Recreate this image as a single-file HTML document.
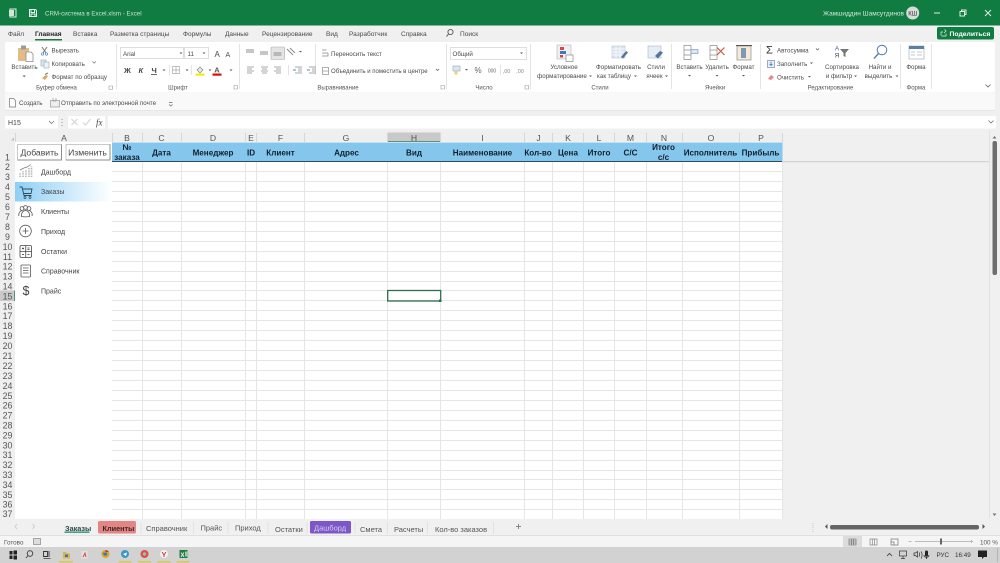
<!DOCTYPE html>
<html lang="ru"><head><meta charset="utf-8"><title>CRM-система в Excel.xlsm - Excel</title>
<style>
html,body{margin:0;padding:0;background:#f0f0f0;overflow:hidden;width:1000px;height:563px}
svg{display:block;font-family:"Liberation Sans",Arial,sans-serif;filter:blur(.3px)}
.r{font-size:6.2px;fill:#4a4a4a}
.t{font-size:6.55px;fill:#4a4a4a}
.h{font-size:8.1px;font-weight:bold;fill:#10202e;text-anchor:middle}
.c{font-size:8.6px;fill:#555;text-anchor:middle}
.n{font-size:8.8px;fill:#555;text-anchor:middle}
.m{font-size:7px;fill:#444}
.s{font-size:7.5px;fill:#555}
.g{font-size:6px;fill:#555;text-anchor:middle}
.a{text-anchor:middle}
</style></head><body>
<svg width="1000" height="563" viewBox="0 0 1000 563" xmlns="http://www.w3.org/2000/svg">
<rect width="1000" height="563" fill="#f0f0f0"/>
<!-- title bar -->
<rect width="1000" height="25.5" fill="#107c41"/>
<rect x="10" y="9" width="6" height="8" fill="none" stroke="#e4f0ea" stroke-width="1"/><rect x="9" y="10" width="5" height="6" fill="#cfe5d9"/>
<path d="M29.5 9.5h6l1 1v6h-7zM31 9.5v3h3.5v-3M31 16.5v-2.5h4v2.5" fill="none" stroke="#eaf4ee" stroke-width="1"/>
<text x="45" y="15.5" style="font-size:6.2px;fill:#c9e2d5">CRM-система в Excel.xlsm  -  Excel</text>
<text x="823" y="15.5" style="font-size:6.5px;fill:#d6eadf">Жамшиддин Шамсутдинов</text>
<circle cx="912.7" cy="13" r="6.5" fill="#d8dcd9"/><text x="912.7" y="15.3" class="a" style="font-size:6px;fill:#333">КШ</text>
<path d="M934 13h6" stroke="#dcebe3"/><path d="M960 11.5h4.5v4.5h-4.5zM961.5 11.5v-1.5h4.500v4.500h-1.500" fill="none" stroke="#dcebe3"/><path d="M985 10l6 6M991 10l-6 6" stroke="#dcebe3"/>
<!-- tabs -->
<rect y="25.500" width="1000" height="17" fill="#f0f0f0"/>
<g class="t">
<text x="8" y="36">Файл</text><text x="35" y="36" style="font-weight:bold;fill:#222">Главная</text><text x="73" y="36">Вставка</text><text x="110" y="36">Разметка страницы</text><text x="183" y="36">Формулы</text><text x="225" y="36">Данные</text><text x="262" y="36">Рецензирование</text><text x="326" y="36">Вид</text><text x="349" y="36">Разработчик</text><text x="401" y="36">Справка</text><text x="460" y="36">Поиск</text>
</g>
<rect x="35" y="39" width="27" height="1.500" fill="#217346"/>
<circle cx="450.500" cy="32" r="2.600" fill="none" stroke="#555" stroke-width=".9"/><path d="M448.500 34l-2 2.500" stroke="#555"/>
<rect x="937" y="27" width="57" height="12.500" rx="2" fill="#107c41"/>
<path d="M941 35.500v-3.500h2M941.500 36h4.500v-2.500M944 33l2-2-1.500-1.500" fill="none" stroke="#e8f3ed" stroke-width=".7"/>
<text x="949.500" y="36" style="font-size:6.800px;font-weight:bold;fill:#fff">Поделиться</text>
<!-- ribbon -->
<rect x="5" y="42" width="990" height="50.500" rx="2" fill="#fff"/>
<rect x="5" y="93" width="990" height="17.500" rx="2" fill="#f9f9f9"/>
<rect x="5" y="110" width="990" height="1" fill="#e6e6e6"/>
<path d="M116.500 44v45M239.500 44v45M315.500 44v31M446.500 44v45M530.500 44v45M671.500 44v45M760.500 44v45M900.500 44v45M931.500 44v45" stroke="#e4e4e4"/>
<g class="g">
<text x="56.500" y="89.500">Буфер обмена</text><text x="178" y="89.500">Шрифт</text><text x="338" y="89.500">Выравнивание</text><text x="484" y="89.500">Число</text><text x="600" y="89.500">Стили</text><text x="715" y="89.500">Ячейки</text><text x="830.500" y="89.500">Редактирование</text><text x="916" y="89.500">Форма</text>
</g>
<path d="M109 86h3.500v3.500h-3.500zM234 85.500h3.500v3.500h-3.500zM441 85.500h3.500v3.500h-3.500zM525 85.500h3.500v3.500h-3.500z" fill="none" stroke="#999" stroke-width=".6"/>
<!-- clipboard -->
<rect x="18" y="48" width="11" height="13" fill="#e2bc84"/><rect x="21" y="45.500" width="5" height="4" fill="#9b9b9b"/><path d="M26 52h5l2 2v7.500h-7z" fill="#fff" stroke="#8a8a8a" stroke-width=".8"/>
<text x="24.500" y="69" class="r a">Вставить</text><path d="M22.500 75.500l1.700 1.700 1.700-1.700" fill="#666"/>
<path d="M42 47l4 6M47 47l-4 6" stroke="#777"/><circle cx="42.500" cy="54" r="1.200" fill="none" stroke="#5585c0" stroke-width=".7"/><circle cx="46.500" cy="54" r="1.200" fill="none" stroke="#5585c0" stroke-width=".7"/>
<text x="51.500" y="52.500" class="r">Вырезать</text>
<rect x="41" y="60" width="5" height="6" fill="#dbe7f2" stroke="#93a8bd" stroke-width=".6"/><rect x="44" y="62" width="5" height="6" fill="#eef3f8" stroke="#93a8bd" stroke-width=".6"/>
<text x="51.500" y="66" class="r">Копировать</text><path d="M92.500 61.500l1.700 1.700 1.700-1.700" fill="none" stroke="#666" stroke-width=".6"/>
<path d="M42 78l4-3 2 1-3 4z" fill="#d9a860"/><path d="M45 74.500l3-1.500" stroke="#777"/>
<text x="51.500" y="79" class="r">Формат по образцу</text>
<!-- font -->
<rect x="120.500" y="47.500" width="63" height="11" fill="#fff" stroke="#dedede"/><rect x="184.500" y="47.500" width="24" height="11" fill="#fff" stroke="#dedede"/>
<text x="123" y="56" class="r">Arial</text><text x="187.500" y="56" class="r">11</text>
<path d="M179.500 52.500l1.500 1.500 1.500-1.500M202.500 52.500l1.500 1.500 1.500-1.500" fill="#555"/>
<text x="214.500" y="57" class="r" style="font-size:8px">A</text><text x="225.500" y="57" class="r" style="font-size:7px">A</text>
<g style="font-size:7.500px;font-weight:bold;fill:#444"><text x="124" y="73">Ж</text><text x="138.500" y="73" style="font-style:italic">К</text><text x="151.500" y="73">Ч</text></g>
<rect x="151" y="74" width="6" height=".8" fill="#444"/><path d="M162.500 69.500l1.500 1.500 1.500-1.500M185.500 69.500l1.500 1.500 1.500-1.500M208.500 69.500l1.500 1.500 1.500-1.500M229.500 69.500l1.500 1.500 1.500-1.500" fill="#555"/>
<path d="M172.500 66.500h7v7h-7zM176 66.500v7M172.500 70h7" fill="none" stroke="#aaa" stroke-width=".7"/>
<path d="M169.500 65v10M191.500 65v10" stroke="#e4e4e4"/>
<path d="M197 70l3-3 3 3-3 3z" fill="#e8e8e8" stroke="#777" stroke-width=".6"/><rect x="195.500" y="73.500" width="9" height="2.200" fill="#f5f000"/>
<text x="217" y="72.500" class="a" style="font-size:7.500px;fill:#555;font-weight:bold">A</text><rect x="212.500" y="73.500" width="9" height="2.200" fill="#d01010"/>
<!-- alignment -->
<rect x="271" y="47" width="13.500" height="12.500" rx="1" fill="#e4e4e4" stroke="#aaa" stroke-width=".6"/>
<path d="M246 50h8M246 52h8M260 52h8M260 54h8M273.500 53h8M273.500 55h8" stroke="#8d8d8d"/>
<path d="M247 67h7M247 69h5M247 71h7M247 73h5M261 67h7M262 69h5M261 71h7M262 73h5M274 67h7M276 69h5M274 71h7M276 73h5" stroke="#8d8d8d" stroke-width=".8"/>
<path d="M288.500 65v10" stroke="#e4e4e4"/>
<path d="M287 49l6 6M290 48l5 5" stroke="#8a8a8a"/>
<path d="M299 51l1.500 1.500 1.500-1.500" fill="#555"/>
<path d="M295 67h7M295 73h7M298 69h4M298 71h4M309 67h7M309 73h7M312 69h4M312 71h4" stroke="#8d8d8d" stroke-width=".8"/>
<path d="M293 70h3M307 70h3" stroke="#4a8fc0"/>
<path d="M322 50h4.500M322 53h6M322 56h4.500M328 53v3h-2" fill="none" stroke="#888" stroke-width=".8"/>
<text x="331" y="56" class="r">Переносить текст</text>
<path d="M322.500 67.500h6v7h-6zM322.500 71h6" fill="none" stroke="#999" stroke-width=".8"/>
<text x="331" y="73" class="r" style="font-size:6.050px">Объединить и поместить в центре</text>
<path d="M436 69l1.500 1.500 1.500-1.500" fill="none" stroke="#555" stroke-width=".7"/>
<!-- number -->
<rect x="450.500" y="47.500" width="76" height="12" fill="#fff" stroke="#dedede"/><text x="452.500" y="56" class="r">Общий</text><path d="M520 52.500l1.500 1.500 1.500-1.500" fill="#555"/>
<rect x="453" y="66" width="7" height="5" fill="#dbe7f2" stroke="#8fa5ba" stroke-width=".6"/><circle cx="456" cy="73" r="1.700" fill="#edd27e"/><path d="M465 69l1.500 1.500 1.500-1.500" fill="#555"/>
<text x="478" y="73" class="a" style="font-size:8px;fill:#666">%</text><text x="492" y="72.500" class="a" style="font-size:5px;fill:#666">000</text>
<path d="M500.500 65v10" stroke="#e4e4e4"/><text x="506.500" y="73" class="a" style="font-size:5.500px;fill:#888">,00</text><text x="520" y="73" class="a" style="font-size:5.500px;fill:#888">,00</text>
<!-- styles -->
<rect x="557" y="45" width="14" height="14" fill="#eef0f3" stroke="#b6b6b6" stroke-width=".6"/><rect x="560" y="47" width="4" height="3" fill="#d04a4a"/><rect x="560" y="51" width="6" height="3" fill="#3f79b8"/><rect x="560" y="55" width="3" height="2.500" fill="#d04a4a"/><rect x="566" y="55" width="7" height="6.500" fill="#fff" stroke="#777" stroke-width=".6"/>
<text x="564" y="69" class="r a">Условное</text><text x="562" y="78" class="r a">форматирование</text><path d="M589 75.500l1.500 1.500 1.500-1.500" fill="#555"/>
<rect x="612" y="46" width="13" height="12" fill="#d9e3ef" stroke="#b8c3d0" stroke-width=".6"/><path d="M612 49h13M612 52h13M612 55h13M616 46v12M620 46v12" stroke="#fff" stroke-width=".7"/><path d="M621 57l5-6 2 1.500-5 6z" fill="#55749a"/>
<text x="618.500" y="69" class="r a">Форматировать</text><text x="614" y="78" class="r a">как таблицу</text><path d="M634 75.500l1.500 1.500 1.500-1.500" fill="#555"/>
<rect x="648" y="46" width="13" height="12" fill="#e7edf4" stroke="#aab8c8" stroke-width=".6"/><path d="M655 56l5-5 3 1.500-5 6z" fill="#55749a"/>
<text x="656" y="69" class="r a">Стили</text><text x="654.500" y="78" class="r a">ячеек</text><path d="M665 75.500l1.500 1.500 1.500-1.500" fill="#555"/>
<!-- cells -->
<path d="M684 45.500h7v14h-7zM684 50h7M684 55h7" fill="none" stroke="#8d8d8d" stroke-width=".7"/><rect x="691" y="49.500" width="7" height="4" fill="#dbe7f2" stroke="#6d90b5" stroke-width=".6"/>
<text x="689.500" y="69" class="r a">Вставить</text><path d="M688 75l1.500 1.500 1.500-1.500" fill="#555"/>
<path d="M710 45.500h7v14h-7zM710 50h7M710 55h7" fill="none" stroke="#8d8d8d" stroke-width=".7"/><path d="M717 47.500l7.500 7.500M724.500 47.500l-7.500 7.500" stroke="#d9533f" stroke-width="1.200"/>
<text x="717" y="69" class="r a">Удалить</text><path d="M715.500 75l1.500 1.500 1.500-1.500" fill="#555"/>
<rect x="737" y="46" width="14" height="14" fill="#f7e9d8" stroke="#8d8d8d" stroke-width=".7"/><rect x="741" y="48" width="5" height="10" fill="#7f98b6"/><path d="M736 45.500h16" stroke="#555"/>
<text x="743.500" y="69" class="r a">Формат</text><path d="M742 75l1.500 1.500 1.500-1.500" fill="#555"/>
<!-- editing -->
<text x="766" y="53.500" style="font-size:11px;fill:#333">Σ</text><text x="777" y="52.500" class="r">Автосумма</text><path d="M816 48.500l1.500 1.500 1.500-1.500" fill="none" stroke="#555" stroke-width=".7"/>
<rect x="767.500" y="60.500" width="7" height="7" fill="#e9eff6" stroke="#6f8fb2" stroke-width=".7"/><path d="M771 61.500v4M769.500 64l1.500 1.500 1.500-1.500" fill="none" stroke="#2f6fb0" stroke-width=".7"/>
<text x="777" y="66" class="r">Заполнить</text><path d="M810 62.500l1.500 1.500 1.500-1.500" fill="#555"/>
<path d="M768 79l3-4 3 2-3 3z" fill="#e6858a"/><text x="777" y="79.500" class="r">Очистить</text><path d="M808 76l1.500 1.500 1.500-1.500" fill="#555"/>
<text x="837" y="50.500" class="a" style="font-size:6.500px;fill:#3f6fa8">А</text><text x="837" y="57.500" class="a" style="font-size:6.500px;fill:#444">Я</text><path d="M840 49h9l-3.500 4v4l-2-1v-3z" fill="#777"/>
<text x="842" y="69" class="r a">Сортировка</text><text x="839" y="78" class="r a">и фильтр</text><path d="M854 75.500l1.500 1.500 1.500-1.500" fill="#555"/>
<circle cx="882" cy="50" r="4.800" fill="#fff" stroke="#5b7fa8" stroke-width="1"/><path d="M878.500 53.500l-4.500 5" stroke="#5b7fa8" stroke-width="1.400"/>
<text x="880" y="69" class="r a">Найти и</text><text x="878.500" y="78" class="r a">выделить</text><path d="M895.500 75.500l1.500 1.500 1.500-1.500" fill="#555"/>
<rect x="909" y="46" width="15" height="13" fill="#fff" stroke="#a8b4c0" stroke-width=".7"/><rect x="909" y="46" width="15" height="3" fill="#5d7fa3"/><path d="M911 52h4M917 52h5M911 55h4M917 55h5" stroke="#c0c8d0"/>
<text x="916" y="69" class="r a">Форма</text>
<path d="M985.500 84.500l2.500 2.500 2.500-2.500" fill="none" stroke="#666" stroke-width=".8"/>
<!-- quick bar -->
<path d="M9.500 98.500h4l2 2v6.500h-6z" fill="#fff" stroke="#777" stroke-width=".7"/><text x="19" y="105" class="r">Создать</text>
<rect x="50.500" y="100.500" width="9" height="6.500" fill="#eee" stroke="#999" stroke-width=".7"/><path d="M53 98v3h3v-3" fill="none" stroke="#999" stroke-width=".7"/>
<text x="61" y="105" class="r">Отправить по электронной почте</text>
<path d="M169 102.500h3.500M169 104.500l1.750 1.500 1.750-1.500" fill="none" stroke="#666" stroke-width=".7"/>
<!-- formula bar -->
<rect x="5" y="116" width="53" height="12.500" fill="#fff"/><text x="8" y="125" style="font-size:7px;fill:#444">H15</text><path d="M49 121l2.500 2.500 2.500-2.500" fill="none" stroke="#666" stroke-width=".7"/>
<path d="M62 119v1M62 122v1M62 125v1" stroke="#999"/>
<rect x="68" y="116" width="37" height="12.500" fill="#fff"/><path d="M71.500 119l6 6M77.500 119l-6 6M83 122.500l2.500 2.500 5-6" fill="none" stroke="#d2d2d2"/>
<text x="96" y="125.500" style="font-family:'Liberation Serif',serif;font-style:italic;font-size:9px;fill:#444">fx</text>
<rect x="108" y="116" width="888" height="12.500" fill="#fff"/><path d="M988.500 120.500l2.500 2.500 2.500-2.500" fill="none" stroke="#777" stroke-width=".8"/>
<!-- sheet white area -->
<rect x="15" y="142" width="767" height="377" fill="#fff"/>
<!-- header blue -->
<rect x="112" y="142.500" width="670.500" height="19" fill="#85c6ec"/>
<rect x="112" y="161" width="670.500" height="1" fill="#2e4a5c"/>
<rect x="782" y="161" width="208" height="1.300" fill="#d4d4d4"/>
<!-- gridlines -->
<g shape-rendering="crispEdges" stroke="#e6e6e6" stroke-width="1" fill="none">
<path d="M112 171.500H782M112 181.500H782M112 191.500H782M112 201.500H782M112 211.500H782M112 221.500H782M112 231.500H782M112 241.500H782M112 251.500H782M112 261.500H782M112 271.500H782M112 281.500H782M112 290.500H782M112 300.500H782M112 310.500H782M112 320.500H782M112 330.500H782M112 340.500H782M112 350.500H782M112 360.500H782M112 370.500H782M112 380.500H782M112 390.500H782M112 400.500H782M112 410.500H782M112 420.500H782M112 430.500H782M112 440.500H782M112 450.500H782M112 460.500H782M112 470.500H782M112 479.500H782M112 489.500H782M112 499.500H782M112 509.500H782"/>
<path d="M142.500 162V519M181.500 162V519M245.500 162V519M256.500 162V519M304.500 162V519M387.500 162V519M440.500 162V519M524.500 162V519M552.500 162V519M583.500 162V519M614.500 162V519M646.500 162V519M682.500 162V519M739.500 162V519M782.500 162V519"/>
</g>
<!-- column header -->
<rect x="0" y="131" width="782" height="11" fill="#efefef"/><rect x="0" y="142" width="15" height="377" fill="#efefef"/>
<path d="M11 140.500l3-3v3z" fill="#bcbcbc"/>
<rect x="387.500" y="132.500" width="53" height="9.500" fill="#c9c9c9"/><rect x="387.500" y="141" width="53" height="1" fill="#5f8f80"/>
<rect x="0" y="290.500" width="15" height="10.500" fill="#c9c9c9"/><rect x="14" y="290.500" width="1" height="10.500" fill="#5f8f80"/>
<path d="M15.500 133v9M112.500 133v9M142.500 133v9M181.500 133v9M245.500 133v9M256.500 133v9M304.500 133v9M387.500 133v9M440.500 133v9M524.500 133v9M552.500 133v9M583.500 133v9M614.500 133v9M646.500 133v9M682.500 133v9M739.500 133v9M782.500 133v9" stroke="#d6d6d6"/>
<g class="c"><text x="64" y="141">A</text><text x="127" y="141">B</text><text x="161.500" y="141">C</text><text x="213" y="141">D</text><text x="251" y="141">E</text><text x="280.500" y="141">F</text><text x="346" y="141">G</text><text x="414" y="141">H</text><text x="482.500" y="141">I</text><text x="538.500" y="141">J</text><text x="568" y="141">K</text><text x="599" y="141">L</text><text x="630.500" y="141">M</text><text x="664" y="141">N</text><text x="711" y="141">O</text><text x="761" y="141">P</text></g>
<!-- column titles -->
<g class="h">
<text x="127" y="150">№</text><text x="127" y="160">заказа</text><text x="161.500" y="155.500">Дата</text><text x="213" y="155.500">Менеджер</text><text x="251" y="155.500">ID</text><text x="280.500" y="155.500">Клиент</text><text x="346.500" y="155.500">Адрес</text><text x="414" y="155.500">Вид</text><text x="482.500" y="155.500">Наименование</text><text x="538" y="155.500">Кол-во</text><text x="568" y="155.500">Цена</text><text x="599" y="155.500">Итого</text><text x="630.500" y="155.500">С/С</text><text x="663.500" y="150">Итого</text><text x="663.500" y="160">с/с</text><text x="710.500" y="155.500">Исполнитель</text><text x="760.500" y="155.500">Прибыль</text>
</g>
<!-- row numbers -->
<g class="n">
<text x="7.500" y="160.500">1</text><text x="7.500" y="170">2</text><text x="7.500" y="180">3</text><text x="7.500" y="190">4</text><text x="7.500" y="200">5</text><text x="7.500" y="210">6</text><text x="7.500" y="220">7</text><text x="7.500" y="230">8</text><text x="7.500" y="240">9</text><text x="7.500" y="250">10</text><text x="7.500" y="260">11</text><text x="7.500" y="269.500">12</text><text x="7.500" y="279.500">13</text><text x="7.500" y="289.500">14</text><text x="7.500" y="299.500">15</text><text x="7.500" y="309.500">16</text><text x="7.500" y="319">17</text><text x="7.500" y="329">18</text><text x="7.500" y="339">19</text><text x="7.500" y="349">20</text><text x="7.500" y="359">21</text><text x="7.500" y="369">22</text><text x="7.500" y="379">23</text><text x="7.500" y="389">24</text><text x="7.500" y="399">25</text><text x="7.500" y="408.500">26</text><text x="7.500" y="418.500">27</text><text x="7.500" y="428.500">28</text><text x="7.500" y="438.500">29</text><text x="7.500" y="448.500">30</text><text x="7.500" y="458">31</text><text x="7.500" y="468">32</text><text x="7.500" y="478">33</text><text x="7.500" y="488">34</text><text x="7.500" y="498">35</text><text x="7.500" y="507.500">36</text><text x="7.500" y="517">37</text>
</g>
<!-- selection -->
<rect x="387.700" y="290.500" width="53" height="10.500" fill="none" stroke="#2b6f4e" stroke-width="1.300"/><rect x="439" y="299.500" width="2.500" height="2.500" fill="#2b6f4e"/>
<!-- buttons -->
<defs><linearGradient id="hl" x1="0" x2="1" y1="0" y2="0"><stop offset="0" stop-color="#8ecff5"/><stop offset="1" stop-color="#fff"/></linearGradient></defs>
<rect x="17.500" y="144.500" width="44" height="15.500" fill="#fff" stroke="#c9c9c9"/><path d="M61.500 144.500v15.500h-44" fill="none" stroke="#8d8d8d"/>
<rect x="66" y="144.500" width="44" height="15.500" fill="#fff" stroke="#c9c9c9"/><path d="M110 144.500v15.500h-44" fill="none" stroke="#8d8d8d"/>
<text x="39.500" y="155.500" class="a" style="font-size:8.600px;fill:#444">Добавить</text><text x="87.500" y="155.500" class="a" style="font-size:8.600px;fill:#444">Изменить</text>
<!-- menu -->
<rect x="15" y="182" width="97" height="19.500" fill="url(#hl)"/>
<g class="m"><text x="41" y="174.500">Дашборд</text><text x="41" y="194">Заказы</text><text x="41" y="214">Клиенты</text><text x="41" y="234">Приход</text><text x="41" y="254">Остатки</text><text x="41" y="273.500">Справочник</text><text x="41" y="293.500">Прайс</text></g>
<!-- menu icons -->
<path d="M20 177v-4M23 177v-6M26 177v-7M29 177v-9M31.500 177v-11" stroke="#b6b6b6" stroke-width="1.600" stroke-dasharray="1 .6"/><path d="M20 170l4-2 3-1 4-2.500" fill="none" stroke="#777" stroke-width=".7"/>
<path d="M19.500 187h2.500l2 8.500h7.500M22.500 189h9.500l-1 4.500h-7.500" fill="none" stroke="#2c4a5c" stroke-width=".9"/><circle cx="25" cy="197.500" r="1" fill="none" stroke="#2c4a5c" stroke-width=".7"/><circle cx="30" cy="197.500" r="1" fill="none" stroke="#2c4a5c" stroke-width=".7"/>
<g fill="none" stroke="#555" stroke-width=".8"><circle cx="22" cy="208.500" r="1.900"/><circle cx="25.500" cy="207.500" r="1.900"/><circle cx="29" cy="208.500" r="1.900"/><path d="M19 216c-1-3.500 2-5.500 3-5.500M32 216c1-3.500-2-5.500-3-5.500M21.500 216.500c-.5-4 2-6 4-6s4.500 2 4 6c-2.500 .5-5.500 .5-8 0z"/></g>
<circle cx="25.500" cy="231" r="5.800" fill="none" stroke="#555" stroke-width=".8"/><path d="M25.500 228v6M22.500 231h6" stroke="#555" stroke-width=".8"/>
<rect x="20" y="245.500" width="11.500" height="12" rx="1.500" fill="none" stroke="#444" stroke-width=".8"/><path d="M25.750 245.500v12M20 251.500h11.500" stroke="#444" stroke-width=".8"/><path d="M22 248.500h2M27.500 248h2M27.500 249.500h2M22 254.500h2M27.500 254.500h2M23 247.500v2" stroke="#333" stroke-width=".7"/>
<rect x="21" y="265" width="9.500" height="12" rx=".8" fill="none" stroke="#555" stroke-width=".8"/><path d="M23 268h5.500M23 270.500h5.500M23 273h5.500" stroke="#555" stroke-width=".7"/>
<text x="26" y="295" class="a" style="font-size:12.500px;fill:#444">$</text>
<!-- right scrollbars -->
<rect x="989" y="129" width="11" height="390" fill="#f0f0f0"/><path d="M989.500 131v387" stroke="#e2e2e2"/>
<path d="M992.500 138.500l2-2.500 2 2.500z" fill="#777"/><rect x="992.500" y="141" width="4.500" height="134" rx="2" fill="#6e6e6e"/><path d="M992.500 513.500l2 2.500 2-2.500z" fill="#777"/>
<!-- sheet tabs -->
<rect y="519" width="1000" height="17" fill="#f0f0f0"/><rect y="535" width="1000" height="1" fill="#e0e0e0"/>
<path d="M17 524l-2 2.500 2 2.500M32.500 524l2 2.500-2 2.500" fill="none" stroke="#c8c8c8" stroke-width=".8"/>
<rect x="98" y="521" width="38" height="12.500" rx="1.500" fill="#e48585"/>
<rect x="310" y="521" width="41" height="12.500" rx="1.500" fill="#7b57c8"/>
<path d="M141 522v12M193.500 522v12M228 522v12M268 522v12M307 522v12M355 522v12M387.500 522v12M427.500 522v12M493.500 522v12" stroke="#e2e2e2"/>
<g class="s">
<text x="65" y="531" style="font-weight:bold;font-size:7.300px;fill:#2d4a45">Заказы</text><text x="102.500" y="531" style="font-weight:bold;font-size:7.300px;fill:#402424">Клиенты</text><text x="146" y="531">Справочник</text><text x="200.500" y="530.500">Прайс</text><text x="235" y="530.500">Приход</text><text x="275" y="532">Остатки</text><text x="314" y="530.500" style="fill:#d9cdf0">Дашборд</text><text x="360" y="532">Смета</text><text x="394" y="532">Расчеты</text><text x="435" y="532">Кол-во заказов</text>
</g>
<rect x="64.500" y="531.500" width="25" height="1.300" fill="#1f8a70"/>
<path d="M518.500 524v5M516 526.500h5" stroke="#888"/>
<path d="M813 523v9" stroke="#c8c8c8" stroke-dasharray="1 1"/>
<path d="M827.500 524l-2.500 2.500 2.500 2.500z" fill="#555"/><rect x="830" y="525" width="149" height="4.500" rx="2" fill="#646464"/><path d="M982.500 524l2.500 2.500-2.500 2.500z" fill="#555"/>
<!-- status bar -->
<rect y="536" width="1000" height="11" fill="#f5f5f5"/>
<text x="4" y="544.500" style="font-size:6.300px;fill:#555">Готово</text>
<rect x="33.500" y="538.500" width="7" height="6" fill="#ddd" stroke="#888" stroke-width=".7"/>
<rect x="843" y="536" width="19" height="11" fill="#dcdcdc"/>
<path d="M849 539h7v6h-7zM851.300 539v6M853.600 539v6M849 541h7M849 543h7" fill="none" stroke="#666" stroke-width=".6"/>
<path d="M870 539h7v6h-7zM872.300 539v6M874.600 539v6" fill="none" stroke="#888" stroke-width=".7"/>
<path d="M891 539h7v6h-7zM891 542h3v3" fill="none" stroke="#777" stroke-width=".7"/>
<path d="M908.500 541.500h3M915 541.500h56M970 541.500h3M971.500 540v3" stroke="#aaa" stroke-width=".7"/>
<rect x="940" y="538.500" width="2" height="6" fill="#666"/>
<text x="980" y="544.500" style="font-size:6.300px;fill:#555">100 %</text>
<!-- taskbar -->
<rect y="547" width="1000" height="16" fill="#d2d2d2"/>
<path d="M5 551h3v3.500H5zM9 550.500h3.500v4H9zM5 555.500h3V559H5zM9 555.500h3.500v4H9z" fill="#222" transform="translate(4.500 0)"/>
<circle cx="30" cy="553.500" r="2.800" fill="none" stroke="#333" stroke-width=".8"/><path d="M28 555.500l-2 2.500" stroke="#333" stroke-width=".8"/>
<path d="M43.500 551.500h4v5h-4zM49 551v6" fill="none" stroke="#333" stroke-width=".9"/><path d="M43.500 558.500h7" stroke="#333" stroke-width=".7"/>
<path d="M63 552h3l1 1.500h3v5h-7z" fill="#dcb24a"/><rect x="65" y="554.500" width="3" height="2.500" fill="#3a78a8"/>
<rect x="81.500" y="551" width="6" height="7.500" fill="#e8e0dc"/><path d="M83 557l2-4 1 4" fill="none" stroke="#c8443c" stroke-width=".9"/>
<circle cx="105.500" cy="554" r="4" fill="#d9a62e"/><path d="M105.500 550a4 4 0 0 1 3.500 2h-4z" fill="#c8443c"/><path d="M102 552l2.500 4 1-1.500" fill="#3f8f4f"/><circle cx="105.500" cy="554" r="1.600" fill="#3a78c0"/>
<circle cx="125" cy="554" r="4" fill="#3d97cc"/><path d="M123 554l4-1.500-1 3.500z" fill="#fff"/>
<circle cx="144.500" cy="554" r="4" fill="#dd4e4e"/><circle cx="144.500" cy="554" r="1.700" fill="#9cc2a5"/>
<circle cx="164" cy="554" r="4" fill="#f2f2f2"/><text x="164" y="557" class="a" style="font-size:7.500px;font-weight:bold;fill:#d9343f">Y</text>
<rect x="179.500" y="550" width="8" height="8" fill="#1f7a46"/><text x="182.500" y="557" class="a" style="font-size:6px;font-weight:bold;fill:#fff">X</text><rect x="185" y="551.500" width="3.500" height="5" fill="#9cc9ae"/>
<path d="M59 561.800h14M118.500 561.800h13M138 561.800h13M157.500 561.800h13M176.500 561.800h13" stroke="#d8c72e" stroke-width="1.200"/>
<path d="M887 556l2.500-2.500 2.500 2.500" fill="none" stroke="#333" stroke-width=".8"/>
<rect x="899.500" y="551" width="7" height="5" fill="none" stroke="#333" stroke-width=".7"/><path d="M903 556v2.500M901 558.500h4" stroke="#333" stroke-width=".7"/>
<path d="M914 553h1.500l2-1.500v5.500l-2-1.500H914zM919 552.500c1 1 1 3 0 4M921 551.500c1.500 2 1.500 5 0 7" fill="none" stroke="#333" stroke-width=".7"/>
<rect x="925" y="550.500" width="3" height="6" rx="1.500" fill="#222"/><path d="M924 555c0 3 5 3 5 0M926.500 557.500v1.500" fill="none" stroke="#222" stroke-width=".8"/>
<text x="936.500" y="557" style="font-size:6.300px;fill:#333">РУС</text><text x="955" y="557" style="font-size:6.300px;fill:#333">16:49</text>
<path d="M978 550.500h9v6.500h-3l-2 2v-2h-4z" fill="#222"/><path d="M997.500 548v14" stroke="#b5b5b5"/>
</svg>
</body></html>
